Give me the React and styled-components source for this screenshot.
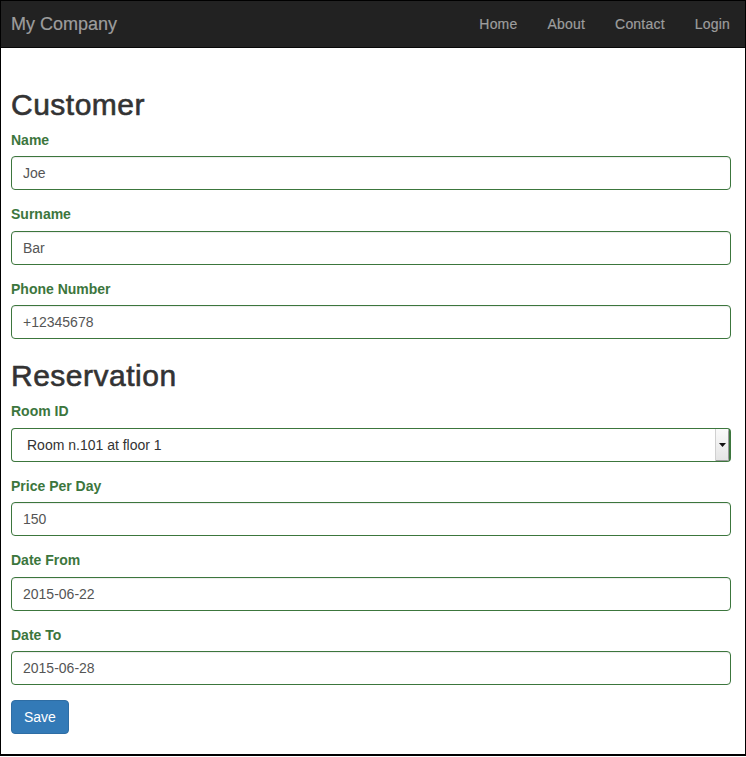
import React from "react";
import styled, { createGlobalStyle } from "styled-components";

const GlobalStyle = createGlobalStyle`
  * { box-sizing: border-box; }
  body {
    margin: 0;
    background: #fff;
    font-family: "Liberation Sans", Arial, sans-serif;
    font-size: 14px;
    line-height: 1.42857;
    color: #333;
  }
`;

const Frame = styled.div`
  border: 1px solid #000;
  border-bottom-width: 2px;
  background: #fff;
`;

const Navbar = styled.nav`
  display: flex;
  align-items: center;
  justify-content: space-between;
  height: 47px;
  background: #222;
  border-bottom: 1px solid #080808;
`;

const Brand = styled.a`
  padding-left: 10px;
  font-size: 18px;
  line-height: 20px;
  color: #9d9d9d;
  text-decoration: none;
  -webkit-text-stroke: 0.2px #9d9d9d;
`;

const NavList = styled.ul`
  display: flex;
  margin: 0;
  padding: 0;
  list-style: none;
`;

const NavLink = styled.a`
  display: block;
  padding: 0 15px;
  line-height: 20px;
  color: #9d9d9d;
  text-decoration: none;
  letter-spacing: 0.2px;
  -webkit-text-stroke: 0.2px #9d9d9d;
`;

const Content = styled.div`
  padding: 20px 14px 20px 10px;
`;

const Heading = styled.h2`
  margin: 20px 0 10px;
  font-size: 30px;
  font-weight: 500;
  line-height: 1.1;
  letter-spacing: 0.5px;
  color: #333;
  -webkit-text-stroke: 0.6px #333;
`;

const FormGroup = styled.div`
  margin-bottom: 15px;
`;

const Label = styled.label`
  display: block;
  margin-bottom: 5.5px;
  font-weight: bold;
  color: #3c763d;
`;

const Input = styled.input`
  display: block;
  width: 100%;
  height: 34px;
  padding: 6px 11px;
  font-family: inherit;
  font-size: 14px;
  color: #555;
  background: #fff;
  border: 1px solid #3c763d;
  border-radius: 4px;
  box-shadow: inset 0 1px 1px rgba(0, 0, 0, 0.075);
  outline: none;
`;

const SelectBox = styled.div`
  display: flex;
  height: 34px;
  border: 1px solid #3c763d;
  border-right-width: 2px;
  border-radius: 4px;
  overflow: hidden;
  background: #fff;
`;

const Select = styled.select`
  flex: 1;
  appearance: none;
  -webkit-appearance: none;
  border: 0;
  padding: 0 0 0 15px;
  font-family: inherit;
  font-size: 14px;
  color: #333;
  background: transparent;
  outline: none;
`;

const ArrowBox = styled.span`
  display: flex;
  align-items: center;
  justify-content: center;
  width: 14px;
  background: linear-gradient(#fafafa, #e4e4e4);
  border-left: 1px solid #d0d0d0;
  box-shadow: inset -1px -1px 0 #9a9a9a;
`;

const Button = styled.button`
  height: 34px;
  padding: 6px 12px;
  font-family: inherit;
  font-size: 14px;
  color: #fff;
  background: #337ab7;
  border: 1px solid #2e6da4;
  border-radius: 4px;
`;

const customerFields = [
  { id: "name", label: "Name", value: "Joe" },
  { id: "surname", label: "Surname", value: "Bar" },
  { id: "phone", label: "Phone Number", value: "+12345678" },
];

const reservationFields = [
  { id: "price", label: "Price Per Day", value: "150" },
  { id: "from", label: "Date From", value: "2015-06-22" },
  { id: "to", label: "Date To", value: "2015-06-28" },
];

function Field({ id, label, value }) {
  return (
    <FormGroup>
      <Label htmlFor={id}>{label}</Label>
      <Input id={id} defaultValue={value} />
    </FormGroup>
  );
}

export default function App() {
  return (
    <Frame>
      <GlobalStyle />
      <Navbar>
        <Brand href="#">My Company</Brand>
        <NavList>
          <li><NavLink href="#">Home</NavLink></li>
          <li><NavLink href="#">About</NavLink></li>
          <li><NavLink href="#">Contact</NavLink></li>
          <li><NavLink href="#">Login</NavLink></li>
        </NavList>
      </Navbar>

      <Content>
        <Heading>Customer</Heading>
        {customerFields.map((f) => (
          <Field key={f.id} {...f} />
        ))}

        <Heading>Reservation</Heading>
        <FormGroup>
          <Label htmlFor="room">Room ID</Label>
          <SelectBox>
            <Select id="room" defaultValue="101">
              <option value="101">Room n.101 at floor 1</option>
            </Select>
            <ArrowBox>
              <svg width="7" height="4" viewBox="0 0 7 4">
                <path d="M0 0h7L3.5 4z" fill="#111" />
              </svg>
            </ArrowBox>
          </SelectBox>
        </FormGroup>
        {reservationFields.map((f) => (
          <Field key={f.id} {...f} />
        ))}

        <Button>Save</Button>
      </Content>
    </Frame>
  );
}
